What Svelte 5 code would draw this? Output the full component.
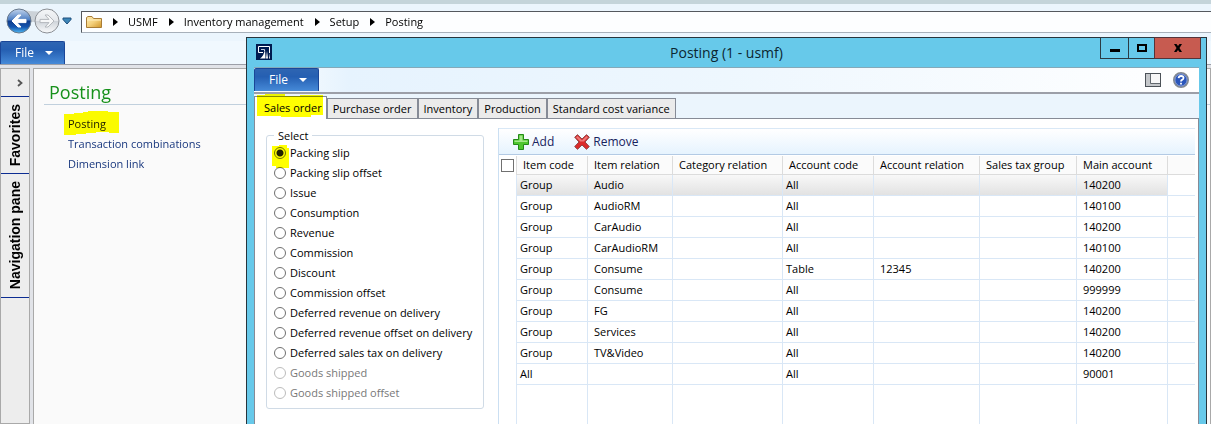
<script lang="ts">
  interface Column {
    key: string;
    label: string;
    width: number;
    tight?: boolean;
  }

  interface Option {
    label: string;
    disabled?: boolean;
  }

  const crumbs = ['USMF', 'Inventory management', 'Setup', 'Posting'];
  const links = ['Posting', 'Transaction combinations', 'Dimension link'];
  const tabs = ['Sales order', 'Purchase order', 'Inventory', 'Production', 'Standard cost variance'];

  const options: Option[] = [
    { label: 'Packing slip' },
    { label: 'Packing slip offset' },
    { label: 'Issue' },
    { label: 'Consumption' },
    { label: 'Revenue' },
    { label: 'Commission' },
    { label: 'Discount' },
    { label: 'Commission offset' },
    { label: 'Deferred revenue on delivery' },
    { label: 'Deferred revenue offset on delivery' },
    { label: 'Deferred sales tax on delivery' },
    { label: 'Goods shipped', disabled: true },
    { label: 'Goods shipped offset', disabled: true },
  ];

  const columns: Column[] = [
    { key: 'code', label: 'Item code', width: 71, tight: true },
    { key: 'item', label: 'Item relation', width: 85 },
    { key: 'category', label: 'Category relation', width: 110 },
    { key: 'accountCode', label: 'Account code', width: 91, tight: true },
    { key: 'account', label: 'Account relation', width: 106 },
    { key: 'tax', label: 'Sales tax group', width: 97 },
    { key: 'main', label: 'Main account', width: 91 },
  ];

  const rows: Record<string, string>[] = [
    { code: 'Group', item: 'Audio', accountCode: 'All', main: '140200' },
    { code: 'Group', item: 'AudioRM', accountCode: 'All', main: '140100' },
    { code: 'Group', item: 'CarAudio', accountCode: 'All', main: '140200' },
    { code: 'Group', item: 'CarAudioRM', accountCode: 'All', main: '140100' },
    { code: 'Group', item: 'Consume', accountCode: 'Table', account: '12345', main: '140200' },
    { code: 'Group', item: 'Consume', accountCode: 'All', main: '999999' },
    { code: 'Group', item: 'FG', accountCode: 'All', main: '140200' },
    { code: 'Group', item: 'Services', accountCode: 'All', main: '140200' },
    { code: 'Group', item: 'TV&Video', accountCode: 'All', main: '140200' },
    { code: 'All', accountCode: 'All', main: '90001' },
  ];

  let activeTab = $state('Sales order');
  let selected = $state('Packing slip');
  let activeRow = $state(0);
</script>

<div class="client">
  <div class="strip"></div>
  <header class="navbar">
    <div class="history">
      <svg class="pill" width="62" height="28" viewBox="0 0 62 28" aria-hidden="true">
        <path d="M14 1 Q33 6 47 1 L47 14 L14 14Z" fill="#ccd2d8" />
      </svg>
      <button type="button" class="round" aria-label="Back">
        <svg width="26" height="26" viewBox="0 0 26 26">
          <defs>
            <linearGradient id="back" x1="0" y1="0" x2="0" y2="1">
              <stop offset="0" stop-color="#c2d4ec" />
              <stop offset=".46" stop-color="#4a7cc2" />
              <stop offset=".5" stop-color="#103c8c" />
              <stop offset=".75" stop-color="#1455ae" />
              <stop offset="1" stop-color="#50baf4" />
            </linearGradient>
          </defs>
          <circle cx="13" cy="13" r="12" fill="url(#back)" stroke="#68788c" />
          <path d="M6 13 L12 7 H15 L11 11.4 H20 V14.6 H11 L15 19 H12Z" fill="#fff" stroke="#fff" stroke-linejoin="round" />
        </svg>
      </button>
      <button type="button" class="round" aria-label="Forward">
        <svg width="26" height="26" viewBox="0 0 26 26">
          <defs>
            <linearGradient id="fwd" x1="0" y1="0" x2="0" y2="1">
              <stop offset="0" stop-color="#f4f6f8" />
              <stop offset=".48" stop-color="#e6e9ed" />
              <stop offset=".52" stop-color="#cfd4da" />
              <stop offset="1" stop-color="#fafbfc" />
            </linearGradient>
          </defs>
          <circle cx="13" cy="13" r="12" fill="url(#fwd)" stroke="#8b8f95" />
          <path d="M20 13 L14 7 H11 L15 11.4 H6 V14.6 H15 L11 19 H14Z" fill="#f6f7f8" stroke="#b4b8bd" stroke-linejoin="round" />
        </svg>
      </button>
      <button type="button" class="drop" aria-label="Recent pages">
        <svg width="10" height="8" viewBox="0 0 10 8"><path d="M1 1 H9 V2.5 L5 7 L1 2.5Z" fill="#3d86b8" stroke="#1f4f7c" /></svg>
      </button>
    </div>
    <nav class="address" aria-label="Path">
      <svg width="16" height="14" viewBox="0 0 16 14" aria-hidden="true">
        <defs>
          <linearGradient id="folder" x1="0" y1="0" x2="1" y2="1">
            <stop offset="0" stop-color="#fdebb0" />
            <stop offset=".5" stop-color="#f4d07c" />
            <stop offset="1" stop-color="#cf9528" />
          </linearGradient>
        </defs>
        <path d="M.5 2.5 L2 1.5 H6 L7.5 3.5 H15.5 V12.5 H.5Z" fill="url(#folder)" stroke="#a87c36" />
        <path d="M1 5 H15" stroke="#fff0c0" />
      </svg>
      {#each crumbs as crumb}
        <svg class="sep" width="5" height="8" viewBox="0 0 5 8" aria-hidden="true"><path d="M0 0 L5 4 L0 8Z" fill="#000" /></svg>
        <a href="#{crumb}">{crumb}</a>
      {/each}
    </nav>
  </header>
  <div class="ribbon outer">
    <button type="button" class="file">File <svg width="8" height="4" viewBox="0 0 8 4"><path d="M0 0 H8 L4 4Z" fill="#fff" /></svg></button>
  </div>
  <div class="workspace">
    <aside class="rail">
      <button type="button" class="expand" aria-label="Expand">
        <svg width="6" height="8" viewBox="0 0 6 8"><path d="M1 1 L4.5 4 L1 7" fill="none" stroke="#555" stroke-width="1.8" /></svg>
      </button>
      <button type="button" class="vertical"><span>Favorites</span></button>
      <button type="button" class="vertical long"><span>Navigation pane</span></button>
    </aside>
    <main class="area">
      <h1>Posting</h1>
      <ul>
        {#each links as link, i}
          <li>
            <a href="#{link}" class:visited={i === 0}>{link}</a>
            {#if i === 0}
              <svg class="marker link-marker" width="55" height="25" viewBox="0 0 55 25" aria-hidden="true">
                <path d="M0 3 H10 V2 H19 V1 H24 V0 H44 V1 H55 V22 H45 V21 H32 V22 H22 V23 H12 V24 H0Z" fill="#ff0" />
              </svg>
            {/if}
          </li>
        {/each}
      </ul>
    </main>
  </div>
</div>

<div class="window" role="dialog" aria-labelledby="window-title">
  <div class="titlebar">
    <svg class="app" width="16" height="16" viewBox="0 0 16 16" aria-hidden="true">
      <rect width="16" height="16" fill="#001b50" />
      <path d="M2.5 2.5 H13.5 V9 M2.5 2.5 V8.5 H7" fill="none" stroke="#fff" />
      <path d="M5 5.5 H8.5 V7" fill="none" stroke="#c2cbdd" />
      <path d="M4 14.5 Q8 12 9 5 L9.5 14.5Z M10 14.5 L11 7 L12 14.5Z M13 14.5 V9 L14 14.5Z" fill="#fff" />
    </svg>
    <h2 id="window-title">Posting (1 - usmf)</h2>
    <div class="controls">
      <button type="button" aria-label="Minimize"><svg width="10" height="10" viewBox="0 0 10 10"><path d="M0 6 H10 V9 H0Z" /></svg></button>
      <button type="button" aria-label="Maximize"><svg width="10" height="10" viewBox="0 0 10 10"><path d="M1 2 H9 V8 H1Z" fill="none" stroke="#000" stroke-width="2" /></svg></button>
      <button type="button" class="close" aria-label="Close"><svg width="10" height="10" viewBox="0 0 10 10"><path d="M1 1 H3.5 L5 3 L6.5 1 H9 L6.5 5 L9 9 H6.5 L5 7 L3.5 9 H1 L3.5 5Z" /></svg></button>
    </div>
  </div>

  <div class="body">
    <div class="ribbon">
      <button type="button" class="file">File <svg width="8" height="4" viewBox="0 0 8 4"><path d="M0 0 H8 L4 4Z" fill="#fff" /></svg></button>
      <div class="tools">
        <button type="button" aria-label="View layout">
          <svg width="16" height="14" viewBox="0 0 16 14">
            <rect x=".5" y=".5" width="15" height="13" fill="#c4c7ca" stroke="#4c5258" />
            <path d="M6 1 H15 V10 H6Z" fill="#f7f7f7" />
            <path d="M5.5 1 V10.5 H15" fill="none" stroke="#62686e" />
          </svg>
        </button>
        <button type="button" aria-label="Help">
          <svg width="16" height="16" viewBox="0 0 16 16">
            <circle cx="8" cy="8" r="7.2" fill="#2b56bb" stroke="#858a90" stroke-width="1.6" />
            <circle cx="8" cy="8" r="6" fill="none" stroke="#b8c4e4" stroke-width=".6" />
            <path d="M5.6 6.2 Q5.8 4 8.1 4 Q10.6 4 10.5 6 Q10.4 7.2 9 7.9 Q8 8.4 8 9.6 M8 10.7 V12.4" fill="none" stroke="#fff" stroke-width="1.8" />
          </svg>
        </button>
      </div>
    </div>

    <div class="tabs" role="tablist">
      {#each tabs as tab}
        <button type="button" role="tab" class:active={tab === activeTab} aria-selected={tab === activeTab} onclick={() => (activeTab = tab)}>{tab}</button>
      {/each}
      <svg class="marker tab-marker" width="66" height="24" viewBox="0 0 66 24" aria-hidden="true">
        <path d="M0 1 H8 V0 H28 V2 H43 V1 H66 V21 H54 V23 H24 V22 H0Z" fill="#ff0" />
      </svg>
    </div>

    <div class="panel">
      <fieldset>
        <legend>Select</legend>
        <svg class="marker radio-marker" width="18" height="24" viewBox="0 0 18 24" aria-hidden="true">
          <path d="M0 1 H7 V0 H15 V3 H17 V23 H4 V21 H0Z" fill="#ff0" />
        </svg>
        {#each options as option}
          <label class:disabled={option.disabled}>
            <input type="radio" name="posting-type" value={option.label} disabled={option.disabled} bind:group={selected} />
            {option.label}
          </label>
        {/each}
      </fieldset>

      <section class="grid">
        <div class="actions">
          <button type="button">
            <svg width="16" height="16" viewBox="0 0 16 16" aria-hidden="true">
              <path d="M5.5 .5 H10.5 V5.5 H15.5 V10.5 H10.5 V15.5 H5.5 V10.5 H.5 V5.5 H5.5Z" fill="#4fc72e" stroke="#238a17" />
              <path d="M6.5 1.5 H9.5 V6.5 H14.5 V8 H1.5 V6.5 H6.5Z" fill="#a4e88a" />
            </svg>
            Add
          </button>
          <button type="button">
            <svg width="16" height="16" viewBox="0 0 16 16" aria-hidden="true">
              <path d="M3.5 .7 L8 5 L12.5 .7 L15.3 3.2 L11 8 L15.3 12.6 L12.5 15.3 L8 11 L3.5 15.3 L.7 12.6 L5 8 L.7 3.2Z" fill="#dc2a2a" stroke="#8e4747" />
              <path d="M3.5 2 L8 6.2 L12.5 2 L14 3.3 L9.8 7.6 H6.2 L2 3.3Z" fill="#ee7777" />
            </svg>
            Remove
          </button>
        </div>
        <div class="scroll">
          <table>
            <colgroup>
              <col class="check" />
              {#each columns as column}
                <col style="width: {column.width}px" />
              {/each}
              <col />
            </colgroup>
            <thead>
              <tr>
                <th class="check"><input type="checkbox" aria-label="Select all" /></th>
                {#each columns as column}
                  <th scope="col">{column.label}</th>
                {/each}
                <td class="rest"></td>
              </tr>
            </thead>
            <tbody>
              {#each rows as row, i}
                <tr class:current={i === activeRow} onclick={() => (activeRow = i)}>
                  <td class="check"></td>
                  {#each columns as column}
                    <td class:tight={column.tight}>{row[column.key] ?? ''}</td>
                  {/each}
                  <td class="rest"></td>
                </tr>
              {/each}
              <tr class="filler">
                <td class="check"></td>
                {#each columns as _}
                  <td></td>
                {/each}
                <td class="rest"></td>
              </tr>
            </tbody>
          </table>
        </div>
      </section>
    </div>
  </div>
</div>

<style>
  :global(body) { margin: 0; overflow: hidden; font: 11px/20px "Open Sans", "Noto Sans", sans-serif; color: #000; }
  button { font: inherit; color: inherit; padding: 0; border: 0; background: none; }
  a { color: inherit; text-decoration: none; }
  svg { display: block; flex: none; }

  .client { min-height: 100vh; display: flex; flex-direction: column; background: #ebf5fd; }
  .strip { height: 4px; background: #c4d4da; }
  .navbar { display: flex; height: 37px; }
  .history { position: relative; width: 81px; display: flex; align-items: flex-start; padding: 4px 0 0 6px; gap: 1px; box-sizing: border-box; }
  .pill { position: absolute; left: 6px; top: 4px; }
  .round { position: relative; width: 27px; height: 26px; }
  .drop { padding: 9px 0 0; }
  .address { flex: 1; display: flex; align-items: center; height: 20px; margin-top: 7px; padding-left: 4px; background: #fdfeff; border: 1px solid #a7b0ba; border-top-color: #54585e; border-left-color: #54585e; border-right: 0; white-space: nowrap; }
  .address a { margin-left: 10px; }
  .sep { margin-left: 11px; }

  .ribbon { display: flex; justify-content: space-between; height: 24px; background: linear-gradient(90deg, #fff, #e6f3fe 10%, #eef7fe 50%, #fff); border-bottom: 2px solid #9c9fa8; }
  .ribbon.outer { height: 23px; background: #f0f8fe; border-bottom-width: 1px; }
  .file { display: flex; align-items: center; gap: 11px; height: 23px; padding: 0 11px 0 14px; background: linear-gradient(#2e65b2, #255fb2 35%, #468ad8); border: 1px solid #1a4698; border-bottom: 0; border-radius: 2px 2px 0 0; color: #fff; font-size: 12px; box-sizing: border-box; }

  .workspace { flex: 1; display: flex; gap: 3px; padding-top: 3px; background: #e1e3e8; }
  .rail { width: 30px; box-sizing: border-box; border: 1px solid #a9a9a9; background: #ededed; display: flex; flex-direction: column; }
  .rail button { display: flex; align-items: center; justify-content: center; border-bottom: 1px solid #0c2c92; box-sizing: border-box; }
  .expand { height: 28px; padding-left: 9px; }
  .vertical { height: 77px; }
  .vertical.long { height: 124px; }
  .vertical span { writing-mode: vertical-rl; transform: rotate(180deg); font: bold 14px/20px "Liberation Sans", Arial, sans-serif; }
  .area { flex: 1; background: #fafafa; border: 1px solid #a9a9a9; border-bottom: 0; padding: 12px 0 0 10px; }
  h1 { margin: 0; padding-left: 5px; font-size: 18px; line-height: 23px; font-weight: 400; color: #17911b; border-bottom: 1px solid #c1d0dd; }
  ul { list-style: none; margin: 9px 0 0; padding: 0 0 0 24px; }
  li { position: relative; color: #18377e; }
  .visited { color: #222; }
  .marker { position: absolute; mix-blend-mode: multiply; pointer-events: none; }
  .link-marker { left: -4px; top: -3px; }

  .window { position: absolute; left: 246px; right: 4px; top: 37px; bottom: 0; display: flex; flex-direction: column; box-sizing: border-box; padding: 0 7px; background: #67c9ea; border: 1px solid #26343c; border-bottom: 0; }
  .titlebar { position: relative; display: flex; align-items: center; justify-content: center; height: 29px; }
  .app { position: absolute; left: 2px; top: 6px; }
  h2 { margin: 0; font-size: 14px; line-height: 28px; font-weight: 400; color: #0b2631; }
  .controls { position: absolute; right: -2px; top: -1px; display: flex; height: 22px; }
  .controls button { display: grid; place-items: center; width: 28px; box-sizing: border-box; border: 1px solid #2b3b44; border-right: 0; }
  .controls button + button { width: 26px; }
  .controls .close.close { width: 47px; background: #c75b50; border: 1px solid #54343a; }

  .body { flex: 1; min-height: 0; display: flex; flex-direction: column; border-top: 1px solid #84a9b9; background: #ebf5fd; }
  .tools { display: flex; align-items: center; gap: 12px; padding-right: 10px; }
  .tabs { position: relative; display: flex; align-items: flex-end; height: 24px; background: #ebf5fd; border-bottom: 1px solid #868b96; white-space: nowrap; }
  .tabs button { height: 20px; padding: 0 5px; line-height: 18px; background: #ebebeb; border: 1px solid #868b96; border-bottom: 0; }
  .tabs .active { height: 23px; padding: 0 4px 0 9px; margin-bottom: -1px; background: #fff; line-height: 22px; }
  .tab-marker { left: 3px; top: 0; }
  .panel { flex: 1; min-height: 0; display: flex; align-items: flex-start; gap: 14px; padding: 9px 3px 0 11px; background: #fff; border: 1px solid #868b96; border-width: 0 1px; }
  fieldset { position: relative; display: flex; flex-direction: column; width: 218px; box-sizing: border-box; margin: 0; padding: 0 0 5px 7px; border: 1px solid #d0dbe6; border-radius: 3px; flex: none; }
  legend { padding: 0 4px; line-height: 15px; }
  label { position: relative; display: flex; align-items: center; gap: 4px; height: 20px; white-space: nowrap; }
  label.disabled { color: #787878; }
  .radio-marker { left: 5px; top: 2px; z-index: 1; }
  input { appearance: none; margin: 0; background: #fff; border: 1px solid #707070; box-sizing: border-box; }
  input[type="radio"] { width: 12px; height: 12px; border-radius: 50%; }
  input[type="radio"]:checked { background: radial-gradient(circle, #222 3px, #fff 4px); }
  input:disabled { border-color: #bcbcbc; }

  .grid { flex: 1; min-width: 0; align-self: stretch; display: flex; flex-direction: column; border-left: 1px solid #cbdff2; }
  .actions { display: flex; align-items: center; gap: 20px; height: 25px; padding-left: 14px; flex: none; background: linear-gradient(#fff, #e6f3fe); border-top: 1px solid #d9e8f6; border-bottom: 1px solid #b3cae4; color: #17235e; font-size: 12px; }
  .actions button { display: flex; align-items: center; gap: 3px; }
  .scroll { flex: 1; min-height: 0; overflow: hidden; padding-top: 1px; }
  table { width: 100%; height: 100%; table-layout: fixed; border-collapse: separate; border-spacing: 0; }
  col.check { width: 18px; }
  th, td { height: 20px; padding: 0 0 0 6px; border-right: 1px solid #d9e7f6; border-bottom: 1px solid #d9e7f6; text-align: left; font-weight: 400; white-space: nowrap; line-height: 18px; }
  th, thead .rest { height: 18px; background: #fbfbfb; border-color: #dcdcdc; }
  .tight { padding-left: 3px; }
  td.check, th.check { padding: 0 0 0 2px; border-bottom: 0; background: #fff; }
  th.check input { display: block; width: 13px; height: 13px; }
  td.rest { border-right: 0; }
  .current td:not(.check):not(.rest) { background: linear-gradient(#f8f8f8, #e2e2e2); }
  .filler td { height: auto; border-bottom: 0; }
</style>
